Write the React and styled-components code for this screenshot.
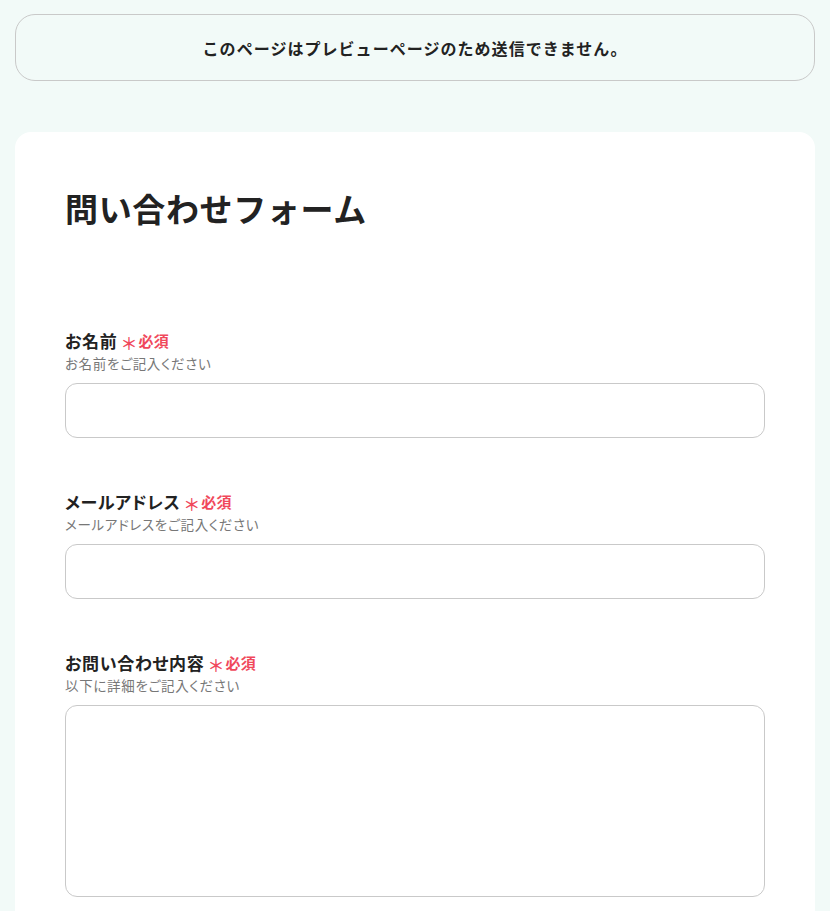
import React from "react";
import styled, { createGlobalStyle } from "styled-components";

const Global = createGlobalStyle`
  * { box-sizing: border-box; }
  html, body { margin: 0; padding: 0; }
  body {
    background: #f2faf8;
    font-family: "Noto Sans CJK JP", "Noto Sans", sans-serif;
    color: #222;
    letter-spacing: 0.04em;
  }
`;

const Page = styled.div`
  padding: 14px 15px 0;
  display: flex;
  flex-direction: column;
  gap: 51px;
`;

const Banner = styled.div`
  height: 67px;
  border: 1px solid #c9c9c9;
  border-radius: 20px;
  display: flex;
  align-items: center;
  justify-content: center;
  font-size: 16px;
  font-weight: 700;
  letter-spacing: 0.065em;
  color: #222;
`;

const Card = styled.div`
  background: #fff;
  border-radius: 16px 16px 0 0;
  padding: 52px 50px 40px;
  display: flex;
  flex-direction: column;
`;

const Title = styled.h1`
  margin: 0 0 97px;
  font-size: 33px;
  line-height: 48px;
  font-weight: 700;
  color: #222;
`;

const Fields = styled.div`
  display: flex;
  flex-direction: column;
  gap: 52px;
`;

const Field = styled.div`
  display: flex;
  flex-direction: column;
`;

const Label = styled.div`
  display: flex;
  align-items: center;
  font-size: 17px;
  line-height: 24px;
  font-weight: 700;
  color: #222;
`;

const LabelText = styled.span`
  font-feature-settings: "palt";
`;

const Asterisk = styled.span`
  color: #f0485b;
  font-size: 17px;
  line-height: 17px;
  font-weight: 500;
  letter-spacing: 0;
  margin: 2px 1px 0 3px;
`;

const Required = styled.span`
  color: #f0485b;
  font-size: 15px;
  line-height: 20px;
  font-weight: 700;
  letter-spacing: 0.02em;
`;

const Hint = styled.div`
  font-size: 13.5px;
  line-height: 20px;
  letter-spacing: 0.05em;
  font-feature-settings: "palt";
  color: #777;
  margin-bottom: 10px;
`;

const Input = styled.input`
  height: 55px;
  width: 100%;
  border: 1px solid #c9c9c9;
  border-radius: 12px;
  background: #fff;
  font: inherit;
  padding: 0 16px;
  outline: none;
`;

const TextArea = styled.textarea`
  height: 192px;
  width: 100%;
  border: 1px solid #c9c9c9;
  border-radius: 12px;
  background: #fff;
  font: inherit;
  padding: 12px 16px;
  resize: none;
  outline: none;
  display: block;
`;

const fields = [
  { label: "お名前", hint: "お名前をご記入ください", type: "input" },
  { label: "メールアドレス", hint: "メールアドレスをご記入ください", type: "input" },
  { label: "お問い合わせ内容", hint: "以下に詳細をご記入ください", type: "textarea" },
];

export default function App() {
  return (
    <>
      <Global />
      <Page>
        <Banner>このページはプレビューページのため送信できません。</Banner>
        <Card>
          <Title>問い合わせフォーム</Title>
          <Fields>
            {fields.map((f) => (
              <Field key={f.label}>
                <Label>
                  <LabelText>{f.label}</LabelText>
                  <Asterisk>＊</Asterisk>
                  <Required>必須</Required>
                </Label>
                <Hint>{f.hint}</Hint>
                {f.type === "input" ? <Input type="text" /> : <TextArea />}
              </Field>
            ))}
          </Fields>
        </Card>
      </Page>
    </>
  );
}
